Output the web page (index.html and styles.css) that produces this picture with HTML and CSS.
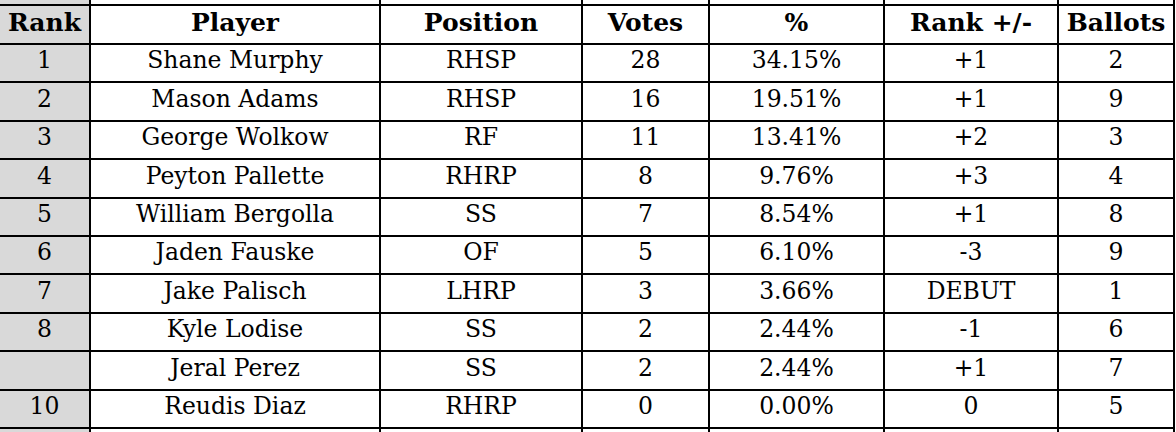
FILE: index.html
```html
<!DOCTYPE html>
<html>
<head>
<meta charset="utf-8">
<link rel="stylesheet" href="styles.css">
</head>
<body>
<div class="sheet">
  <div class="grid">
    <div class="c rank"></div><div class="c"></div><div class="c"></div><div class="c"></div><div class="c"></div><div class="c"></div><div class="c"></div>

    <div class="c rank hd">Rank</div><div class="c hd">Player</div><div class="c hd">Position</div><div class="c hd">Votes</div><div class="c hd">%</div><div class="c hd">Rank +/-</div><div class="c hd">Ballots</div>

    <div class="c rank">1</div><div class="c">Shane Murphy</div><div class="c">RHSP</div><div class="c">28</div><div class="c">34.15%</div><div class="c">+1</div><div class="c">2</div>
    <div class="c rank">2</div><div class="c">Mason Adams</div><div class="c">RHSP</div><div class="c">16</div><div class="c">19.51%</div><div class="c">+1</div><div class="c">9</div>
    <div class="c rank">3</div><div class="c">George Wolkow</div><div class="c">RF</div><div class="c">11</div><div class="c">13.41%</div><div class="c">+2</div><div class="c">3</div>
    <div class="c rank">4</div><div class="c">Peyton Pallette</div><div class="c">RHRP</div><div class="c">8</div><div class="c">9.76%</div><div class="c">+3</div><div class="c">4</div>
    <div class="c rank">5</div><div class="c">William Bergolla</div><div class="c">SS</div><div class="c">7</div><div class="c">8.54%</div><div class="c">+1</div><div class="c">8</div>
    <div class="c rank">6</div><div class="c">Jaden Fauske</div><div class="c">OF</div><div class="c">5</div><div class="c">6.10%</div><div class="c">-3</div><div class="c">9</div>
    <div class="c rank">7</div><div class="c">Jake Palisch</div><div class="c">LHRP</div><div class="c">3</div><div class="c">3.66%</div><div class="c">DEBUT</div><div class="c">1</div>
    <div class="c rank">8</div><div class="c">Kyle Lodise</div><div class="c">SS</div><div class="c">2</div><div class="c">2.44%</div><div class="c">-1</div><div class="c">6</div>
    <div class="c rank"></div><div class="c">Jeral Perez</div><div class="c">SS</div><div class="c">2</div><div class="c">2.44%</div><div class="c">+1</div><div class="c">7</div>
    <div class="c rank">10</div><div class="c">Reudis Diaz</div><div class="c">RHRP</div><div class="c">0</div><div class="c">0.00%</div><div class="c">0</div><div class="c">5</div>

    <div class="c rank"></div><div class="c"></div><div class="c"></div><div class="c"></div><div class="c"></div><div class="c"></div><div class="c"></div>
  </div>
</div>
</body>
</html>
```
FILE: styles.css
```css
html, body {
  margin: 0;
  padding: 0;
  background: #fff;
}
.sheet {
  width: 1176px;
  height: 432px;
  overflow: hidden;
  background: #fff;
}
.grid {
  display: grid;
  width: 1175px;
  box-sizing: border-box;
  grid-template-columns: 89px 288px 200px 125px 173px 172px 114px;
  grid-template-rows: 4px 37px repeat(10, 36.4px) 30px;
  gap: 2px;
  padding-right: 2px;
  background: #000;
  font-family: "DejaVu Serif", "Liberation Serif", serif;
  font-size: 23.5px;
  color: #000;
}
.c {
  background: #fff;
  display: flex;
  align-items: center;
  justify-content: center;
  padding-bottom: 4px;
  box-sizing: border-box;
  white-space: nowrap;
  overflow: hidden;
  line-height: 1;
}
.rank {
  background: #d9d9d9;
}
.hd {
  font-weight: bold;
  font-size: 25px;
  padding-bottom: 5px;
}
```
